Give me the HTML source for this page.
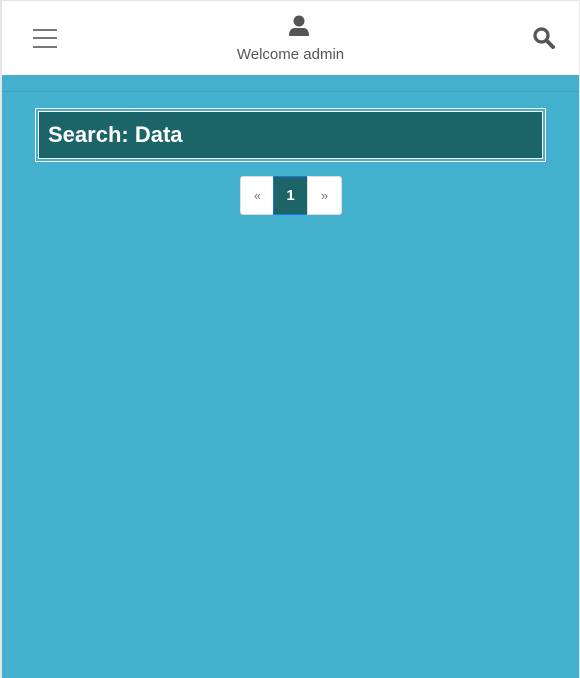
<!DOCTYPE html>
<html><head><style>
html,body{margin:0;padding:0;width:580px;height:678px;overflow:hidden;background:#e6e6e6;font-family:"Liberation Sans",sans-serif}
.wrap{position:absolute;left:2px;top:1px;width:577px;height:677px;background:#43b0cd}
.hdr{position:absolute;left:0;top:0;width:577px;height:74px;background:#fff}
.line{position:absolute;left:0;top:90px;width:577px;height:1px;background:#3a9fba}
.ham{position:absolute;left:31px;width:24px;height:2px;background:#777}
.wel{position:absolute;left:0;width:577px;top:45px;text-align:center;font-size:15px;color:#555}
.title{position:absolute;left:33px;top:107px;width:509px;height:52px;border:1px solid #fff;}
.title div{position:absolute;left:2px;top:2px;right:2px;bottom:2px;border:1px solid #fff;background:#1b6467;color:#fff;font-weight:bold;font-size:22px;line-height:46px;padding-left:9px}
.pg{position:absolute;top:175px;height:37px;border:1px solid #ddd;background:#fff;font-size:13px;color:#777;text-align:center;line-height:37px}
</style></head><body><div class="wrap">
<div class="hdr">
<div class="ham" style="top:28px"></div><div class="ham" style="top:36px"></div><div class="ham" style="top:45px"></div>
<svg style="position:absolute;left:286px;top:14px" width="22" height="22" viewBox="0 0 22 22"><circle cx="11" cy="6" r="5.5" fill="#555"/><path d="M1 21 Q1 13 7 13 L15 13 Q21 13 21 21 Z" fill="#555"/></svg>
<div class="wel">Welcome admin</div>
<svg style="position:absolute;left:530px;top:25px" width="24" height="24" viewBox="0 0 24 24"><circle cx="9.5" cy="9.5" r="6.5" fill="none" stroke="#555" stroke-width="3.2"/><path d="M14.5 14.5 L21 21" stroke="#555" stroke-width="4" stroke-linecap="round"/></svg>
</div>
<div class="line"></div>
<div class="title"><div>Search: Data</div></div>
<div class="pg" style="left:238px;width:33px;border-radius:3px 0 0 3px">«</div>
<div class="pg" style="left:271px;width:33px;background:#1b6467;border-color:#1a73e8;color:#fff;font-weight:bold;font-size:15px">1</div>
<div class="pg" style="left:305px;width:33px;border-radius:0 3px 3px 0">»</div>
</div></body></html>
